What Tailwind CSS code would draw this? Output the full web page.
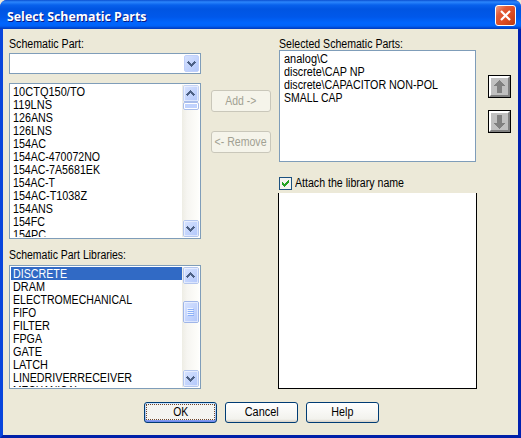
<!DOCTYPE html>
<html lang="en">
<head>
<meta charset="utf-8">
<title>Select Schematic Parts</title>
<script src="https://cdn.jsdelivr.net/npm/@tailwindcss/browser@4"></script>
</head>
<body class="overflow-hidden bg-[#ece9d8]">
<svg width="0" height="0" class="absolute">
  <defs>
    <linearGradient id="face" x1="0" y1="0" x2="1" y2="1"><stop offset="0" stop-color="#d6e2ff"/><stop offset="1" stop-color="#b3c8fb"/></linearGradient>
    <symbol id="down" viewBox="0 0 9 6"><path fill="#4d6185" d="M0 1h1V0h1v1h1v1h1v1h1V2h1V1h1V0h1v1h1v1H8v1H7v1H6v1H5v1H4V5H3V4H2V3H1V2H0z"/></symbol>
    <symbol id="up" viewBox="0 0 9 6"><path fill="#4d6185" d="M0 5h1v1h1V5h1V4h1V3h1v1h1v1h1v1h1V5h1V4H8V3H7V2H6V1H5V0H4v1H3v1H2v1H1v1H0z"/></symbol>
  </defs>
</svg>
<div class="flex h-[438px] w-[521px] flex-col overflow-hidden rounded-t-[7px] bg-[#0831d9] font-['Liberation_Sans',sans-serif] text-[12px] leading-[13px] whitespace-nowrap text-black">
  <header class="flex h-[29px] shrink-0 items-center justify-between bg-[linear-gradient(#0a4fd0_0px,#2b86fc_2px,#0861ec_5px,#0055e2_9px,#0058ea_17px,#0066fe_23px,#0062f8_26px,#0045cc_28px,#003bc0_29px)] pr-[5px] pl-[7px]">
    <h1 class="pt-[2px] font-['Open_Sans',sans-serif] text-[13px] leading-[18px] font-bold text-white [text-shadow:1px_1px_0_#0a1883]"><span data-w="139.5" data-font="bold 13px 'Open Sans'" class="inline-block origin-left">Select Schematic Parts</span></h1>
    <button class="mt-[2px] flex h-[21px] w-[21px] items-center justify-center rounded-[3px] border border-white bg-[linear-gradient(135deg,#f0a088_0%,#e25b37_30%,#dc4a20_65%,#b83a10_100%)]">
      <svg width="11" height="11" viewBox="0 0 11 11"><path d="M1 1l9 9M10 1l-9 9" stroke="#fff" stroke-width="2.2"/></svg>
    </button>
  </header>
  <main class="flex min-h-0 flex-1 flex-col border-x-3 border-b-3 border-t-0 border-l-[#0845dc] border-r-[#0020b0] border-b-[#0020a8] bg-[#ece9d8]">
    <div class="flex h-[360px]">
      <section class="ml-[6px] w-[192px] shrink-0 pt-[9px]">
        <div class="h-[15px]"><span data-w="75" class="inline-block origin-left">Schematic Part:</span></div>
        <div class="flex h-[21px] justify-end border border-[#7f9db9] bg-white p-px">
          <button class="flex h-[17px] w-[15px] items-center justify-center rounded-[2px] border border-[#c0d0fa] bg-[linear-gradient(135deg,#d6e2ff,#b3c8fb)]"><svg width="9" height="6"><use href="#down"/></svg></button>
        </div>
        <div class="mt-[9px] flex h-[156px] overflow-hidden border border-[#7f9db9] bg-white p-px">
          <ul class="h-[152px] flex-1 overflow-hidden leading-[15px] *:h-[13px] *:pl-[2px]">
            <li><span data-w="72" class="inline-block origin-left">10CTQ150/TO</span></li>
            <li><span data-w="39" class="inline-block origin-left">119LNS</span></li>
            <li><span data-w="40" class="inline-block origin-left">126ANS</span></li>
            <li><span data-w="39" class="inline-block origin-left">126LNS</span></li>
            <li><span data-w="33" class="inline-block origin-left">154AC</span></li>
            <li><span data-w="87" class="inline-block origin-left">154AC-470072NO</span></li>
            <li><span data-w="87" class="inline-block origin-left">154AC-7A5681EK</span></li>
            <li><span data-w="42" class="inline-block origin-left">154AC-T</span></li>
            <li><span data-w="74" class="inline-block origin-left">154AC-T1038Z</span></li>
            <li><span data-w="40" class="inline-block origin-left">154ANS</span></li>
            <li><span data-w="32" class="inline-block origin-left">154FC</span></li>
            <li><span data-w="33" class="inline-block origin-left">154PC</span></li>
          </ul>
          <div class="flex h-[152px] w-[17px] flex-col bg-[linear-gradient(90deg,#eeede5,#f6f5f1_30%,#fefefb)] pl-px">
            <svg width="16" height="25" viewBox="0 0 16 25"><rect x=".5" y=".5" width="15" height="16" rx="1.5" fill="#fff" stroke="#c5d3f4"/><rect x="1.5" y="1.5" width="13" height="14" rx="1" fill="url(#face)"/><use href="#up" x="3" y="5" width="9" height="6"/><path d="M1 16.5h14" stroke="#a9bdea"/><rect x=".5" y="17.5" width="15" height="7" rx="1.5" fill="#fff" stroke="#a9bdea"/><rect x="2" y="19" width="12" height="4" fill="#c0d2fd"/></svg>
            <svg class="mt-auto" width="16" height="17" viewBox="0 0 16 17"><rect x=".5" y=".5" width="15" height="16" rx="1.5" fill="#fff" stroke="#b4c6ee"/><rect x="1.5" y="1.5" width="13" height="14" rx="1" fill="url(#face)"/><use href="#down" x="3" y="6" width="9" height="6"/></svg>
          </div>
        </div>
        <div class="mt-[10px] h-[16px]"><span data-w="117" class="inline-block origin-left">Schematic Part Libraries:</span></div>
        <div class="flex h-[124px] overflow-hidden border border-[#7f9db9] bg-white p-px">
          <ul class="h-[120px] flex-1 overflow-hidden leading-[15px] *:h-[13px] *:pl-[2px]">
            <li class="bg-[#316ac5] text-white"><span data-w="54" class="inline-block origin-left">DISCRETE</span></li>
            <li><span data-w="32" class="inline-block origin-left">DRAM</span></li>
            <li><span data-w="119" class="inline-block origin-left">ELECTROMECHANICAL</span></li>
            <li><span data-w="23" class="inline-block origin-left">FIFO</span></li>
            <li><span data-w="37" class="inline-block origin-left">FILTER</span></li>
            <li><span data-w="29" class="inline-block origin-left">FPGA</span></li>
            <li><span data-w="29" class="inline-block origin-left">GATE</span></li>
            <li><span data-w="35" class="inline-block origin-left">LATCH</span></li>
            <li><span data-w="119" class="inline-block origin-left">LINEDRIVERRECEIVER</span></li>
            <li><span data-w="67" class="inline-block origin-left">MECHANICAL</span></li>
          </ul>
          <div class="flex h-[120px] w-[17px] flex-col bg-[linear-gradient(90deg,#eeede5,#f6f5f1_30%,#fefefb)] pl-px">
            <svg width="16" height="17" viewBox="0 0 16 17"><rect x=".5" y=".5" width="15" height="16" rx="1.5" fill="#fff" stroke="#b4c6ee"/><rect x="1.5" y="1.5" width="13" height="14" rx="1" fill="url(#face)"/><use href="#up" x="3" y="5" width="9" height="6"/></svg>
            <svg class="mt-[17px]" width="16" height="22" viewBox="0 0 16 22"><rect x=".5" y=".5" width="15" height="21" rx="1.5" fill="#fff" stroke="#9fb5e8"/><rect x="1.5" y="1.5" width="13" height="19" rx="1" fill="url(#face)"/><path d="M4 7.5h6M4 9.5h6M4 11.5h6M4 13.5h6" stroke="#eef4fe"/><path d="M5 8.5h6M5 10.5h6M5 12.5h6M5 14.5h6" stroke="#8cb0f8"/></svg>
            <svg class="mt-auto" width="16" height="17" viewBox="0 0 16 17"><rect x=".5" y=".5" width="15" height="16" rx="1.5" fill="#fff" stroke="#b4c6ee"/><rect x="1.5" y="1.5" width="13" height="14" rx="1" fill="url(#face)"/><use href="#down" x="3" y="6" width="9" height="6"/></svg>
          </div>
        </div>
      </section>
      <section class="ml-[10px] flex w-[60px] shrink-0 flex-col gap-[19px] pt-[61px] text-[#a1a192]">
        <button class="flex h-[22px] items-center justify-center rounded-[3px] border border-[#c9c7ba] bg-[#f5f4ea]"><span data-w="31">Add -&gt;</span></button>
        <button class="flex h-[22px] items-center justify-center rounded-[3px] border border-[#c9c7ba] bg-[#f5f4ea]"><span data-w="52">&lt;- Remove</span></button>
      </section>
      <section class="ml-[7px] w-[199px] shrink-0 pt-[9px]">
        <div class="h-[12px] pl-px"><span data-w="124" class="inline-block origin-left">Selected Schematic Parts:</span></div>
        <ul class="mx-px h-[112px] border border-[#7f9db9] bg-white pt-[2px] pl-[4px] *:h-[13px]">
          <li><span data-w="44" class="inline-block origin-left">analog\C</span></li>
          <li><span data-w="81" class="inline-block origin-left">discrete\CAP NP</span></li>
          <li><span data-w="154" class="inline-block origin-left">discrete\CAPACITOR NON-POL</span></li>
          <li><span data-w="59" class="inline-block origin-left">SMALL CAP</span></li>
        </ul>
        <label class="mt-[15px] ml-px flex h-[16px] gap-[3px]">
          <svg width="13" height="13" viewBox="0 0 13 13"><rect x=".5" y=".5" width="12" height="12" fill="#f3f3ef" stroke="#1c5180"/><path fill="#21a121" d="M3 5h1v1h1v1h1V6h1V5h1V4h1V3h1v3H9v1H8v1H7v1H6v1H5V9H4V8H3z"/></svg>
          <span data-w="109" class="inline-block origin-left">Attach the library name</span>
        </label>
        <div class="h-[196px] border border-t-0 border-black bg-white"></div>
      </section>
      <section class="ml-[11px] flex w-[23px] shrink-0 flex-col gap-[12px] pt-[46px]">
        <svg width="23" height="23" viewBox="0 0 23 23"><path fill="#000" d="M0 0h23v23H0z"/><path fill="#fff" d="M1 1h21v21H1z"/><path fill="#808080" d="M22 1v21H1l2-2h17V3z"/><path fill="#c0c0c0" d="M3 3h17v17H3z"/><path fill="#808080" d="M11 5h1v1h1v1h1v1h1v1h1v1h1v1h-3v7H9v-7H6v-1h1V9h1V8h1V7h1V6h1z"/></svg>
        <svg width="23" height="23" viewBox="0 0 23 23"><path fill="#000" d="M0 0h23v23H0z"/><path fill="#fff" d="M1 1h21v21H1z"/><path fill="#808080" d="M22 1v21H1l2-2h17V3z"/><path fill="#c0c0c0" d="M3 3h17v17H3z"/><path fill="#808080" d="M11 19h1v-1h1v-1h1v-1h1v-1h1v-1h1v-1h-3V5H9v8H6v1h1v1h1v1h1v1h1v1h1z"/></svg>
      </section>
    </div>
    <footer class="mt-[13px] ml-[141px] flex gap-[8px]">
      <button class="flex h-[21px] w-[73px] shrink-0 rounded-[3px] border border-[#003c74] bg-[linear-gradient(#cee7ff,#a8c0f0_80%,#6982ee)] px-px pt-px pb-[2px]"><span class="flex h-full w-full items-center justify-center border border-dotted border-[#70452a] bg-[#f4f4f1] pt-px"><span data-w="15">OK</span></span></button>
      <button class="flex h-[21px] w-[73px] shrink-0 items-center justify-center rounded-[3px] border border-[#003c74] bg-[linear-gradient(#fff,#f2f2ed_85%,#d6d0c5)]"><span data-w="34">Cancel</span></button>
      <button class="flex h-[21px] w-[73px] shrink-0 items-center justify-center rounded-[3px] border border-[#003c74] bg-[linear-gradient(#fff,#f2f2ed_85%,#d6d0c5)]"><span data-w="22">Help</span></button>
    </footer>
  </main>
</div>
<script>
  // Condense each label horizontally to its intended width.
  var ctx = document.createElement('canvas').getContext('2d');
  document.querySelectorAll('[data-w]').forEach(function (el) {
    ctx.font = el.dataset.font || '12px "Liberation Sans"';
    el.style.transform = 'scaleX(' + Number(el.dataset.w) / ctx.measureText(el.textContent).width + ')';
  });
</script>
</body>
</html>
